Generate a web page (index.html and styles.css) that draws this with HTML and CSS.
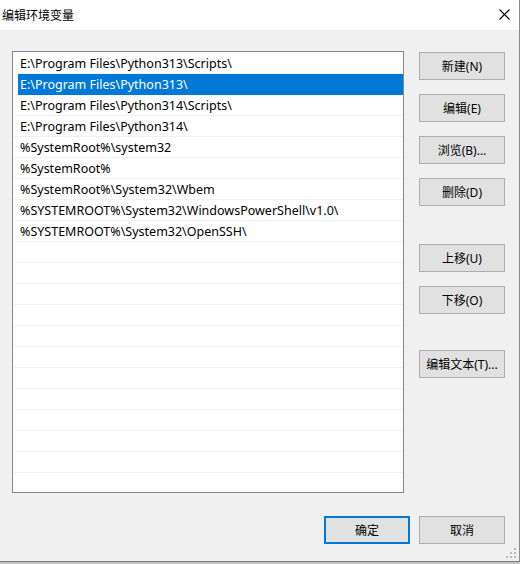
FILE: index.html
```html
<!DOCTYPE html>
<html lang="zh-CN">
<head>
  <meta charset="UTF-8">
  <meta name="viewport" content="width=device-width, initial-scale=1.0">
  <title>编辑环境变量</title>
  <link rel="stylesheet" href="styles.css">
</head>
<body>
  <div class="window">
    <div class="titlebar">
      <span class="title">编辑环境变量</span>
      <svg class="close" width="11" height="11" viewBox="0 0 11 11">
        <path d="M0.5 0.5 L10.5 10.5 M10.5 0.5 L0.5 10.5" stroke="#000" stroke-width="1.1" fill="none"/>
      </svg>
    </div>

    <div class="content">
      <div class="main">
        <ul class="path-list">
          <li class="row"><span class="cell">E:\Program Files\Python313\Scripts\</span></li>
          <li class="row selected"><span class="cell">E:\Program Files\Python313\</span></li>
          <li class="row"><span class="cell">E:\Program Files\Python314\Scripts\</span></li>
          <li class="row"><span class="cell">E:\Program Files\Python314\</span></li>
          <li class="row"><span class="cell">%SystemRoot%\system32</span></li>
          <li class="row"><span class="cell">%SystemRoot%</span></li>
          <li class="row"><span class="cell">%SystemRoot%\System32\Wbem</span></li>
          <li class="row"><span class="cell">%SYSTEMROOT%\System32\WindowsPowerShell\v1.0\</span></li>
          <li class="row"><span class="cell">%SYSTEMROOT%\System32\OpenSSH\</span></li>
          <li class="row"><span class="cell"></span></li>
          <li class="row"><span class="cell"></span></li>
          <li class="row"><span class="cell"></span></li>
          <li class="row"><span class="cell"></span></li>
          <li class="row"><span class="cell"></span></li>
          <li class="row"><span class="cell"></span></li>
          <li class="row"><span class="cell"></span></li>
          <li class="row"><span class="cell"></span></li>
          <li class="row"><span class="cell"></span></li>
          <li class="row"><span class="cell"></span></li>
          <li class="row"><span class="cell"></span></li>
          <li class="row"><span class="cell"></span></li>
          <li class="row"><span class="cell"></span></li>
        </ul>

        <div class="side-buttons">
          <div class="btn-group">
            <button class="btn">新建(N)</button>
            <button class="btn">编辑(E)</button>
            <button class="btn">浏览(B)...</button>
            <button class="btn">删除(D)</button>
          </div>
          <div class="btn-group move-group">
            <button class="btn">上移(U)</button>
            <button class="btn">下移(O)</button>
          </div>
          <div class="btn-group text-group">
            <button class="btn">编辑文本(T)...</button>
          </div>
        </div>
      </div>

      <div class="footer">
        <button class="btn default">确定</button>
        <button class="btn">取消</button>
      </div>
    </div>

    <!-- size grip in the bottom-right corner -->
    <svg class="grip" width="12" height="12" viewBox="0 0 12 12">
      <rect x="8" y="0" width="2" height="2" fill="#bcbcbc"/>
      <rect x="4" y="4" width="2" height="2" fill="#bcbcbc"/>
      <rect x="8" y="4" width="2" height="2" fill="#bcbcbc"/>
      <rect x="0" y="8" width="2" height="2" fill="#bcbcbc"/>
      <rect x="4" y="8" width="2" height="2" fill="#bcbcbc"/>
      <rect x="8" y="8" width="2" height="2" fill="#bcbcbc"/>
    </svg>
  </div>
</body>
</html>
```

FILE: styles.css
```css
html {
  background-color: #c4c4c4;
}
body {
  margin: 0;
  font-family: 'Noto Sans', 'Noto Sans CJK SC', sans-serif;
  font-size: 12px;
  color: #000;
}
.window {
  position: relative;
  width: 520px;
  height: 562px;
  box-sizing: border-box;
  background-color: #f0f0f0;
  border-right: 1px solid #8a8a8a;
  border-bottom: 1px solid #7d7d7d;
  overflow: hidden;
}
.titlebar {
  height: 30px;
  background-color: #fff;
  display: flex;
  align-items: center;
  justify-content: space-between;
  padding: 0 9px 0 2px;
  font-family: 'Noto Sans CJK SC', sans-serif;
}
.title {
  font-size: 12px;
  line-height: 30px;
}
.close {
  display: block;
  margin-top: -1px;
}
.content {
  padding: 21px 14px 0 12px;
}
.main {
  display: flex;
  gap: 15px;
}
.path-list {
  list-style: none;
  margin: 0;
  padding: 1px 0 0 0;
  width: 392px;
  height: 442px;
  box-sizing: border-box;
  background-color: #fff;
  border: 1px solid #828790;
  overflow: hidden;
}
.row {
  margin-left: 1px;
  height: 20px;
  border-bottom: 1px solid #f0f0f0;
  display: flex;
}
.cell {
  flex: 1;
  margin-left: 4px;
  padding-left: 2px;
  height: 20px;
  font-size: 12.5px;
  line-height: 22px;
  white-space: nowrap;
  overflow: hidden;
}
.row.selected .cell {
  background-color: #0078d7;
  color: #fff;
  height: 21px;
}
.side-buttons {
  padding-top: 1px;
  display: flex;
  flex-direction: column;
}
.btn-group {
  display: flex;
  flex-direction: column;
  gap: 14px;
}
.move-group {
  margin-top: 38px;
}
.text-group {
  margin-top: 36px;
}
.btn {
  width: 86px;
  height: 28px;
  box-sizing: border-box;
  background-color: #e1e1e1;
  border: 1px solid #adadad;
  border-radius: 0;
  padding: 0;
  font-family: 'Noto Sans', 'Noto Sans CJK SC', sans-serif;
  font-size: 12px;
  color: #000;
}
.btn.default {
  border: 2px solid #0078d7;
}
.footer {
  display: flex;
  justify-content: flex-end;
  gap: 9px;
  margin-top: 23px;
}
.grip {
  position: absolute;
  right: 1px;
  bottom: 1px;
}
```
